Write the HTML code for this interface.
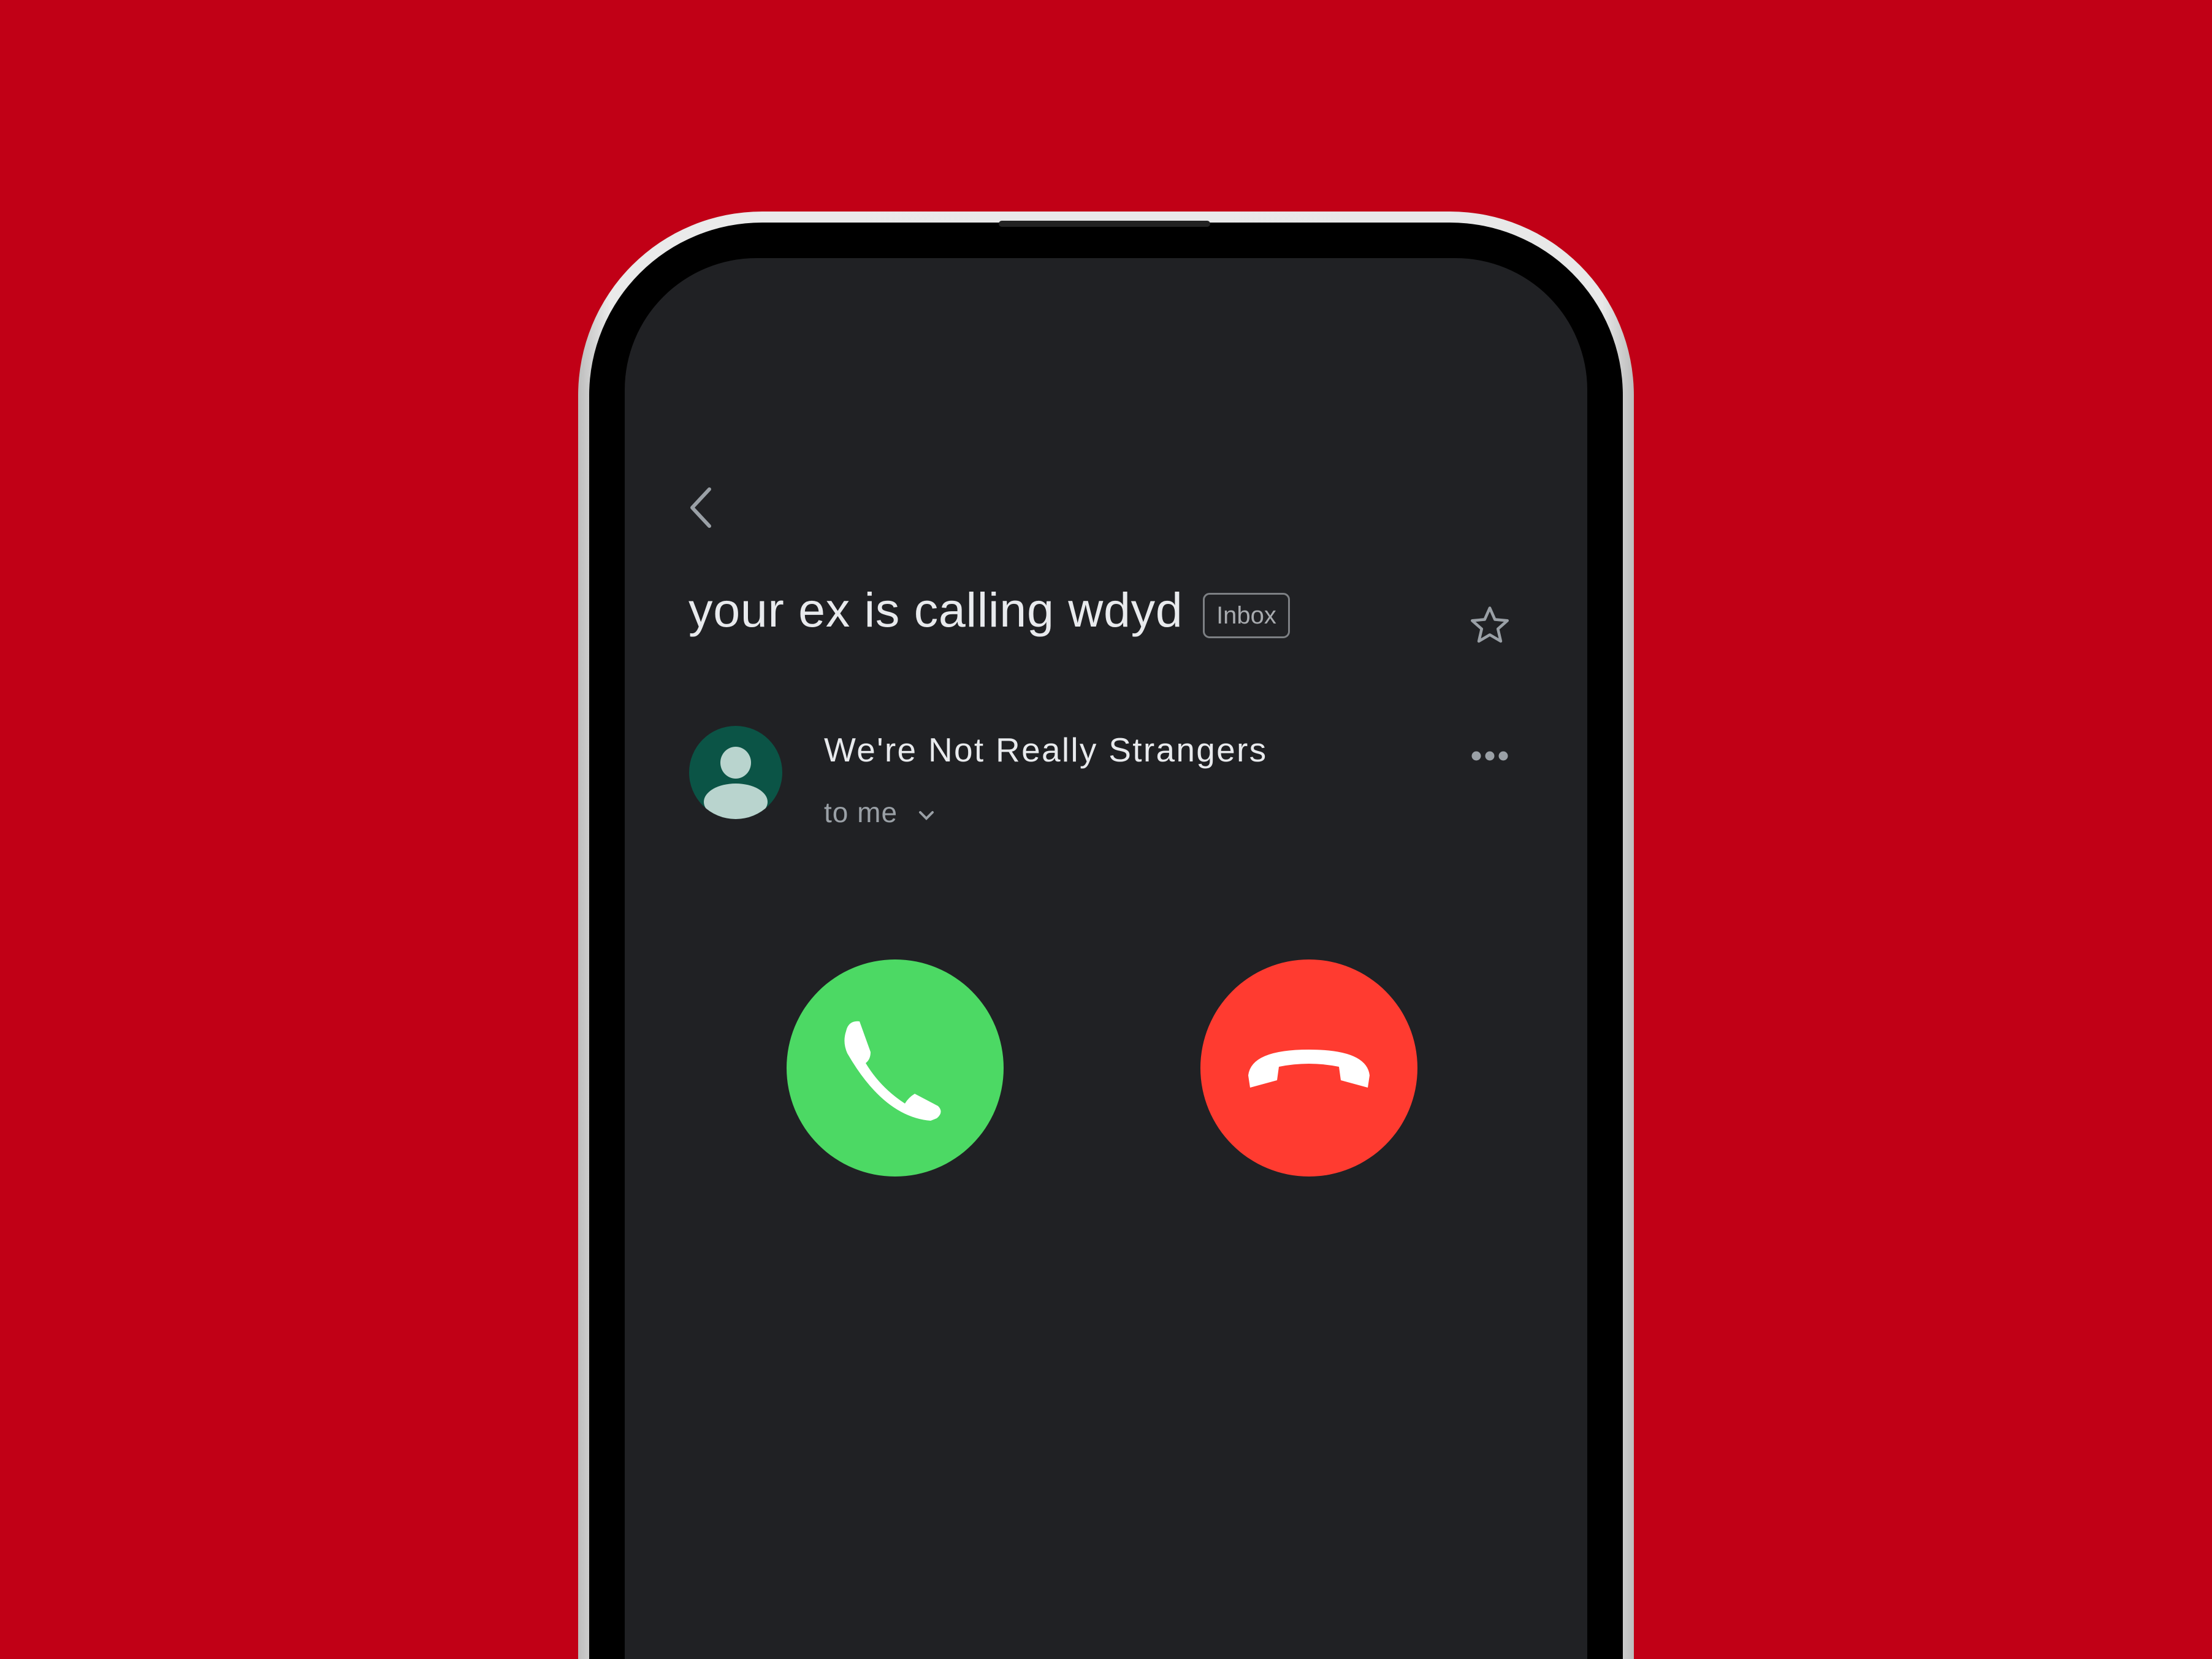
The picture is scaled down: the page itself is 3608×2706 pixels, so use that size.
<!DOCTYPE html>
<html><head><meta charset="utf-8"><style>
html,body{margin:0;padding:0;width:3608px;height:2706px;overflow:hidden}
body{background:#c10016;position:relative;font-family:"Liberation Sans",sans-serif}
.wrap{position:absolute;left:0;top:0;width:3608px;height:2706px;overflow:hidden}
.frame{position:absolute;left:943px;top:345px;width:1722px;height:2361px;border-radius:300px 300px 0 0;background:linear-gradient(90deg,#bdbdbd,#eaeaea 3%,#e8e8e8 97%,#bdbdbd)}
.bezel{position:absolute;left:18px;top:18px;right:18px;bottom:0;border-radius:282px 282px 0 0;background:#000}
.screen{position:absolute;left:1019px;top:421px;width:1570px;height:2285px;border-radius:215px 215px 0 0;background:#202124}
.abs{position:absolute}
</style></head><body><div class="wrap">
<div class="frame"><div class="bezel"></div></div>
<div class="abs" style="left:1629px;top:360px;width:345px;height:10px;background:#222;border-radius:5px"></div>
<div class="screen"></div>

<svg class="abs" style="left:1115px;top:790px" width="60" height="80" viewBox="0 0 60 80"><path d="M42 8 L14 38 L42 68" fill="none" stroke="#9aa0a6" stroke-width="6" stroke-linecap="round" stroke-linejoin="round"/></svg>

<div class="abs" style="left:1123px;top:955px;font-size:79px;color:#e8eaed;white-space:nowrap;line-height:1;letter-spacing:0.7px">your ex is calling wdyd</div>

<div class="abs" style="left:1962px;top:967px;width:136px;height:68px;border:3px solid #7d8084;border-radius:11px;color:#a8abaf;font-size:40px;line-height:68px;text-align:center">Inbox</div>

<svg class="abs" style="left:2393px;top:983px" width="74" height="74" viewBox="0 0 24 24"><path d="M12 2.8l2.7 6.1 6.6.6-5 4.4 1.5 6.5L12 17l-5.8 3.4 1.5-6.5-5-4.4 6.6-.6z" fill="none" stroke="#9aa0a6" stroke-width="1.5" stroke-linejoin="round"/></svg>

<svg class="abs" style="left:1124px;top:1184px" width="152" height="152" viewBox="0 0 152 152"><defs><clipPath id="c"><circle cx="76" cy="76" r="76"/></clipPath></defs><circle cx="76" cy="76" r="76" fill="#0b5446"/><g clip-path="url(#c)" fill="#b9d4ce"><ellipse cx="76" cy="60" rx="25" ry="26"/><ellipse cx="76" cy="124" rx="52" ry="30"/></g></svg>

<div class="abs" style="left:1344px;top:1196px;font-size:55px;color:#e8eaed;white-space:nowrap;line-height:1;letter-spacing:2.3px">We're Not Really Strangers</div>
<div class="abs" style="left:1344px;top:1302px;font-size:46px;color:#9aa0a6;white-space:nowrap;line-height:1;letter-spacing:1px">to me</div>
<svg class="abs" style="left:1496px;top:1318px" width="30" height="24" viewBox="0 0 30 24"><path d="M5 7 L15 17 L25 7" fill="none" stroke="#9aa0a6" stroke-width="4" stroke-linecap="round"/></svg>

<svg class="abs" style="left:2398px;top:1220px" width="64" height="26"><circle cx="10" cy="13" r="7.5" fill="#9aa0a6"/><circle cx="32" cy="13" r="7.5" fill="#9aa0a6"/><circle cx="54" cy="13" r="7.5" fill="#9aa0a6"/></svg>

<div class="abs" style="left:1283px;top:1565px;width:354px;height:354px;border-radius:50%;background:#4cd964"></div>
<svg class="abs" style="left:1376px;top:1662px" width="170" height="170" viewBox="0 0 170 170"><path d="M4 20 Q8 2 26 4 L44 54 Q44 66 36 72 Q60 112 100 138 Q106 128 116 122 L154 142 Q164 152 152 162 L142 166 Q66 160 6 56 Q-2 38 4 20 Z" fill="#fff"/></svg>

<div class="abs" style="left:1958px;top:1565px;width:354px;height:354px;border-radius:50%;background:#ff3b30"></div>
<svg class="abs" style="left:2035px;top:1712px" width="200" height="64" viewBox="0 0 200 64"><path d="M1 42 Q6 0 100 0 Q194 0 199 42 L196 62 L152 50 L149 28 Q100 18 51 28 L48 50 L4 62 Z" fill="#fff"/></svg>
</div></body></html>
